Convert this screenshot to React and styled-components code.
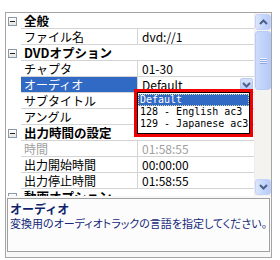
import React from 'react';
import styled, { createGlobalStyle } from 'styled-components';

const Global = createGlobalStyle`
  html, body { margin: 0; padding: 0; background: #ffffff; }
  body { font-family: "Noto Sans CJK JP", "Noto Sans", sans-serif; }
  #root { width: 280px; height: 260px; overflow: hidden; }
`;

const Frame = styled.div`
  position: relative;
  box-sizing: border-box;
  margin: 12px 0 0 5px;
  width: 267px;
  height: 246px;
  border: 1px solid #a5a5a5;
  background: #f8f8f8;
  display: flex;
  flex-direction: column;
`;

const GridArea = styled.div`
  display: flex;
  height: 183px;
  background: #ffffff;
  overflow: hidden;
`;

const Rows = styled.div`
  flex: 1;
  display: flex;
  flex-direction: column;
  overflow: hidden;
`;

const Row = styled.div`
  display: flex;
  flex: 0 0 16px;
  height: 16px;
  box-sizing: border-box;
  font-size: 12px;
  line-height: 15px;
  color: #000;
`;

const Gutter = styled.div`
  flex: 0 0 15px;
  display: flex;
  align-items: center;
  background: #ffffff;
`;

const Expander = styled.div`
  box-sizing: border-box;
  width: 9px;
  height: 9px;
  margin-left: 2px;
  border: 1px solid #8c9aa8;
  background: linear-gradient(#ffffff, #e4e4e4);
  position: relative;
  &::after {
    content: '';
    position: absolute;
    left: 1px;
    top: 3px;
    width: 5px;
    height: 1px;
    background: #202020;
  }
`;

const CatLabel = styled.div`
  flex: 1;
  padding-left: 3px;
  font-weight: bold;
  font-size: 12.5px;
  border-bottom: 1px solid #d4d4d4;
  white-space: nowrap;
`;

const Label = styled.div`
  flex: 0 0 113px;
  padding-left: 3px;
  border-bottom: 1px solid #d4d4d4;
  border-right: 1px solid #d4d4d4;
  background: ${p => (p.$selected ? '#316ac5' : '#ffffff')};
  color: ${p => (p.$selected ? '#ffffff' : p.$disabled ? '#a0a0a0' : '#000000')};
  white-space: nowrap;
  overflow: hidden;
`;

const Value = styled.div`
  flex: 1;
  display: flex;
  align-items: flex-start;
  padding-left: 4px;
  border-bottom: 1px solid #d4d4d4;
  color: ${p => (p.$disabled ? '#a0a0a0' : '#000000')};
  white-space: nowrap;
  overflow: hidden;
`;

const ValueText = styled.span`
  flex: 1;
`;

const DropBtn = styled.div`
  box-sizing: border-box;
  flex: 0 0 13px;
  height: 14px;
  margin: 1px 1px 0 0;
  border: 1px solid #b9c9f1;
  border-radius: 2px;
  background: linear-gradient(#d6e1fb, #b4c8f6);
  display: flex;
  align-items: center;
  justify-content: center;
`;

const ScrollBar = styled.div`
  flex: 0 0 17px;
  display: flex;
  flex-direction: column;
  background: #f4f3ef;
  border-left: 1px solid #eeede8;
  box-sizing: border-box;
`;

const SBtn = styled.div`
  box-sizing: border-box;
  flex: 0 0 16px;
  margin: 1px 0;
  border: 1px solid #c3d3fd;
  border-radius: 3px;
  background: linear-gradient(90deg, #dbe6fd, #c3d4fc 60%, #b7cbfa);
  display: flex;
  align-items: center;
  justify-content: center;
`;

const Track = styled.div`
  flex: 1;
  display: flex;
  flex-direction: column;
`;

const Thumb = styled.div`
  box-sizing: border-box;
  height: 59px;
  border: 1px solid #b7cbf9;
  border-radius: 3px;
  background: linear-gradient(90deg, #cddbfd, #c1d3fb 50%, #b5c9f8);
  display: flex;
  flex-direction: column;
  align-items: center;
  justify-content: center;
  gap: 1px;
`;

const Grip = styled.div`
  width: 7px;
  height: 1px;
  background: #eef3ff;
  box-shadow: 0 1px 0 #8ca7e4;
`;

const Splitter = styled.div`
  flex: 0 0 2px;
`;

const Help = styled.div`
  box-sizing: border-box;
  height: 54px;
  margin: 0 1px;
  border: 1px solid #a0a0a0;
  background: #fcfcfc;
  padding: 3px 2px;
  color: #14297a;
  font-size: 12px;
  line-height: 14px;
  overflow: hidden;
`;

const HelpTitle = styled.div`
  font-weight: bold;
  color: #0f1f6a;
`;

const HelpText = styled.div`
  white-space: nowrap;
  font-size: 11px;
  font-feature-settings: "palt";
  letter-spacing: 0;
`;

const Popup = styled.div`
  position: absolute;
  left: 128px;
  top: 76px;
  width: 119px;
  height: 48px;
  box-sizing: border-box;
  border: 3px solid #f00000;
  background: #ffffff;
`;

const List = styled.div`
  box-sizing: border-box;
  height: 100%;
  border: 1px solid #000000;
  background: #ffffff;
  display: flex;
  flex-direction: column;
  padding-top: 1px;
`;

const Item = styled.div`
  box-sizing: border-box;
  height: 12px;
  line-height: 10px;
  font-family: "DejaVu Sans Mono", "Liberation Mono", monospace;
  font-size: 10px;
  padding-left: 1px;
  white-space: nowrap;
  color: ${p => (p.$selected ? '#ffffff' : '#000000')};
  background: ${p => (p.$selected ? '#316ac5' : 'transparent')};
  border: 1px dotted ${p => (p.$selected ? '#d8d8a8' : 'transparent')};
`;

const Chevron = ({ up, color = '#4d6185' }) => (
  <svg width="9" height="6" viewBox="0 0 9 6">
    <path
      d={up ? 'M1 5 L4.5 1.5 L8 5' : 'M1 1 L4.5 4.5 L8 1'}
      fill="none"
      stroke={color}
      strokeWidth="2"
    />
  </svg>
);

const rows = [
  { cat: true, label: '全般' },
  { label: 'ファイル名', value: 'dvd://1' },
  { cat: true, label: 'DVDオプション' },
  { label: 'チャプタ', value: '01-30' },
  { label: 'オーディオ', value: 'Default', selected: true, dropdown: true },
  { label: 'サブタイトル', value: '' },
  { label: 'アングル', value: '' },
  { cat: true, label: '出力時間の設定' },
  { label: '時間', value: '01:58:55', disabled: true },
  { label: '出力開始時間', value: '00:00:00' },
  { label: '出力停止時間', value: '01:58:55' },
  { cat: true, label: '動画オプション' },
];

const items = ['Default', '128 - English ac3', '129 - Japanese ac3'];

export default function App() {
  return (
    <>
      <Global />
      <Frame>
        <GridArea>
          <Rows>
            {rows.map((r, i) =>
              r.cat ? (
                <Row key={i}>
                  <Gutter>
                    <Expander />
                  </Gutter>
                  <CatLabel>{r.label}</CatLabel>
                </Row>
              ) : (
                <Row key={i}>
                  <Gutter />
                  <Label $selected={r.selected} $disabled={r.disabled}>
                    {r.label}
                  </Label>
                  <Value $disabled={r.disabled}>
                    <ValueText>{r.value}</ValueText>
                    {r.dropdown && (
                      <DropBtn>
                        <Chevron />
                      </DropBtn>
                    )}
                  </Value>
                </Row>
              )
            )}
          </Rows>
          <ScrollBar>
            <SBtn>
              <Chevron up />
            </SBtn>
            <Track>
              <Thumb>
                <Grip />
                <Grip />
                <Grip />
              </Thumb>
            </Track>
            <SBtn>
              <Chevron />
            </SBtn>
          </ScrollBar>
        </GridArea>
        <Splitter />
        <Help>
          <HelpTitle>オーディオ</HelpTitle>
          <HelpText>変換用のオーディオトラックの言語を指定してください。</HelpText>
        </Help>
        <Popup>
          <List>
            {items.map((t, i) => (
              <Item key={t} $selected={i === 0}>
                {t}
              </Item>
            ))}
          </List>
        </Popup>
      </Frame>
    </>
  );
}
